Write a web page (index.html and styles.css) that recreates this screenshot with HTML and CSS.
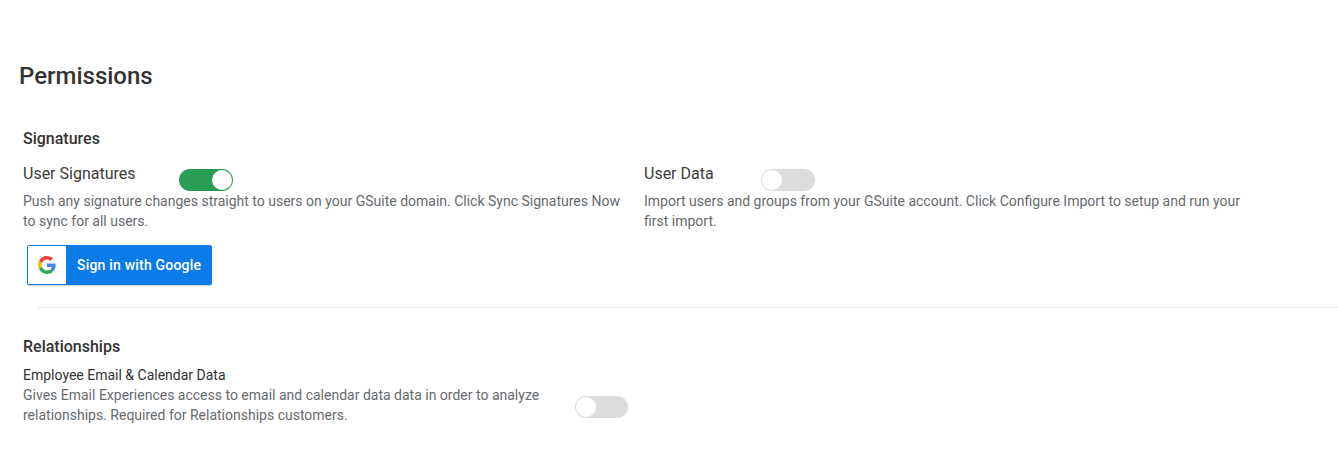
FILE: index.html
```html
<!DOCTYPE html>
<html lang="en">
<head>
<meta charset="utf-8">
<title>Permissions</title>
<link rel="stylesheet" href="styles.css">
</head>
<body>
<main class="page">
  <h1 class="title">Permissions</h1>
  <section class="section signatures">
    <h2 class="section-title">Signatures</h2>
    <div class="columns">
      <div class="perm">
        <div class="perm-head">
          <span class="perm-name">User Signatures</span>
          <span class="toggle on"><span class="knob"></span></span>
        </div>
        <p class="desc">Push any signature changes straight to users on your GSuite domain. Click Sync Signatures Now to sync for all users.</p>
        <a class="google-btn" href="#">
          <span class="google-icon">
            <svg width="18" height="18" viewBox="0 0 48 48" aria-hidden="true">
              <path fill="#EA4335" d="M24 9.5c3.54 0 6.71 1.22 9.21 3.6l6.85-6.85C35.9 2.38 30.47 0 24 0 14.62 0 6.51 5.38 2.56 13.22l7.98 6.19C12.43 13.72 17.74 9.5 24 9.5z"/>
              <path fill="#4285F4" d="M46.98 24.55c0-1.57-.15-3.09-.38-4.55H24v9.02h12.94c-.58 2.96-2.26 5.48-4.78 7.18l7.73 6c4.51-4.18 7.09-10.36 7.09-17.65z"/>
              <path fill="#FBBC05" d="M10.53 28.59c-.48-1.45-.76-2.99-.76-4.59s.27-3.14.76-4.59l-7.98-6.19C.92 16.46 0 20.12 0 24c0 3.88.92 7.54 2.56 10.78l7.97-6.19z"/>
              <path fill="#34A853" d="M24 48c6.48 0 11.93-2.13 15.89-5.81l-7.73-6c-2.15 1.45-4.92 2.3-8.16 2.3-6.26 0-11.57-4.22-13.47-9.91l-7.98 6.19C6.51 42.62 14.62 48 24 48z"/>
            </svg>
          </span>
          <span class="google-label">Sign in with Google</span>
        </a>
      </div>
      <div class="perm">
        <div class="perm-head">
          <span class="perm-name">User Data</span>
          <span class="toggle"><span class="knob"></span></span>
        </div>
        <p class="desc">Import users and groups from your GSuite account. Click Configure Import to setup and run your first import.</p>
      </div>
    </div>
  </section>
  <hr class="divider">
  <section class="section relationships">
    <h2 class="section-title">Relationships</h2>
    <div class="rel-row">
      <div class="rel-text">
        <div class="rel-name">Employee Email &amp; Calendar Data</div>
        <p class="desc">Gives Email Experiences access to email and calendar data data in order to analyze relationships. Required for Relationships customers.</p>
      </div>
      <span class="toggle small"><span class="knob"></span></span>
    </div>
  </section>
</main>
</body>
</html>
```
FILE: styles.css
```css
* { box-sizing: border-box; }
html, body { margin: 0; padding: 0; background: #fff; }
body {
  font-family: Roboto, "Liberation Sans", sans-serif;
  color: #333;
  height: 459px;
  overflow: hidden;
}
.page { padding: 61px 0 0 19px; }
.title {
  margin: 0;
  font-size: 24px;
  line-height: 30px;
  font-weight: 500;
  color: #333;
}
.section { padding-left: 4px; }
.signatures { margin-top: 38px; }
.section-title {
  margin: 0;
  font-size: 16px;
  line-height: 20px;
  font-weight: 500;
  color: #333;
}
.columns {
  display: grid;
  grid-template-columns: 600px 600px;
  column-gap: 21px;
  margin-top: 15px;
}
.perm-head { display: flex; align-items: flex-start; height: 27px; }
.perm-name {
  font-size: 16px;
  line-height: 20px;
  color: #3c3c3c;
  min-width: 117px;
}
.perm .toggle { margin-left: 39px; margin-top: 5px; }
.perm:nth-child(2) .toggle { margin-left: 0; }
.toggle {
  display: inline-flex;
  flex: none;
  width: 54px;
  height: 22px;
  border-radius: 11px;
  background: #dcdcdc;
  padding: 1px;
}
.toggle.small { width: 53px; }
.toggle.on { background: #2a9d55; justify-content: flex-end; }
.knob {
  width: 20px;
  height: 20px;
  border-radius: 50%;
  background: #fff;
}
.desc {
  margin: 0;
  font-size: 14px;
  line-height: 20px;
  color: #666a6e;
}
.google-btn {
  display: flex;
  align-items: stretch;
  width: 185px;
  height: 40px;
  margin: 14px 0 0 4px;
  background: #0a7be8;
  border: 1px solid #0a7be8;
  border-radius: 2px;
  text-decoration: none;
  box-shadow: 0 1px 1px rgba(0,0,0,.2);
}
.google-icon {
  width: 38px;
  background: #fff;
  display: flex;
  align-items: center;
  justify-content: center;
}
.google-label {
  flex: 1;
  padding-left: 11px;
  color: #fff;
  font-size: 14px;
  font-weight: 500;
  line-height: 38px;
  letter-spacing: .2px;
}
.divider {
  margin: 22px 0 0 19px;
  border: 0;
  border-top: 1px solid #e8e8e8;
}
.relationships { margin-top: 29px; }
.rel-row { display: flex; align-items: flex-start; margin-top: 8px; }
.rel-name { font-size: 14px; line-height: 20px; color: #333; }
.rel-text { width: 552px; }
.rel-row .toggle { margin-top: 31px; }
```
